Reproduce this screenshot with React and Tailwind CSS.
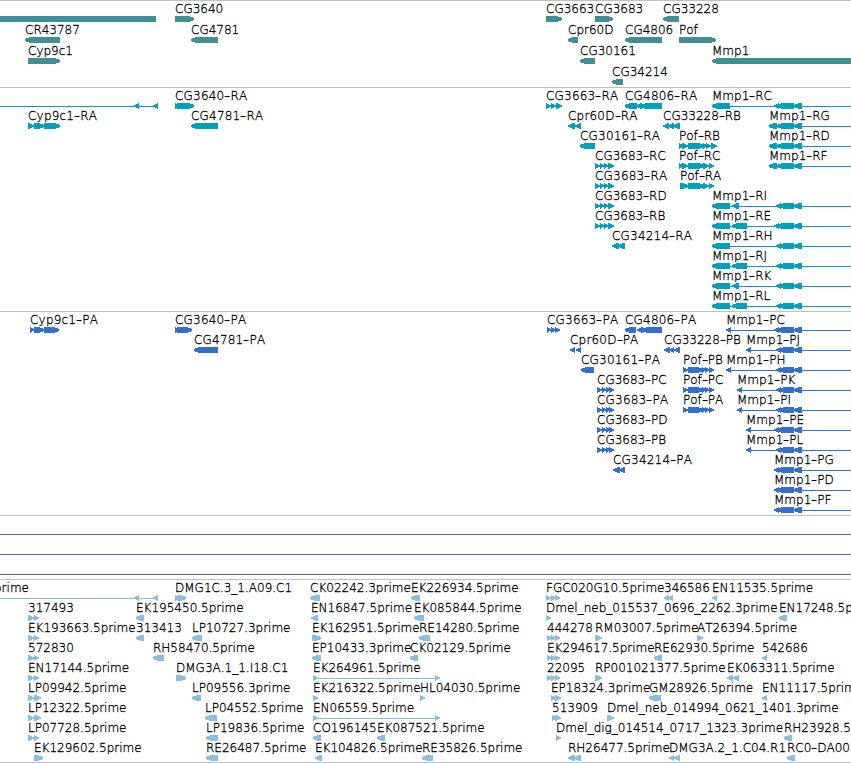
// A feature is { x, label, dir, segs, line }.
// segs are [start, end] pairs, line is the thin intron line behind them.
const f = (x, label, dir, segs, line) => ({ x, label, dir, segs, line })

const END = 860

const genes = [
    [
        f(0, "", "N", [[0, 156]]),
        f(175, "CG3640", "R", [[175, 194]]),
        f(546, "CG3663", "R", [[546, 562]]),
        f(595, "CG3683", "R", [[595, 613]]),
        f(663, "CG33228", "L", [[663, 679]]),
    ],
    [
        f(25, "CR43787", "L", [[25, 60]]),
        f(191, "CG4781", "L", [[191, 218]]),
        f(568, "Cpr60D", "L", [[568, 578]]),
        f(625, "CG4806", "L", [[625, 662]]),
        f(679, "Pof", "R", [[679, 716]]),
    ],
    [
        f(28, "Cyp9c1", "R", [[28, 60]]),
        f(580, "CG30161", "L", [[580, 595]]),
        f(712, "Mmp1", "L", [[712, END]]),
    ],
    [f(612, "CG34214", "L", [[612, 623]])],
]

// Mmp1 isoforms share the same exons on the right side
const tailA = [[774, 779], [777, 794], [794, 802]]
const tailB = [[776, 781], [779, 794], [794, 802]]
const tailC = [[769, 777], [777, 794], [794, 802]]
const mmp = (x, label, head, tail) => f(x, label, "L", [...head, ...tail], [x + 3, END])

const cg3683R = [[595, 600], [600, 604], [604, 608], [608, 614]]
const cg3683P = [[597, 602], [602, 606], [606, 610], [609, 614]]
const pofP = [[683, 688], [688, 703], [702, 706], [705, 709], [709, 714]]

const transcripts = [
    [
        f(0, "", "L", [[134, 139], [153, 158]], [0, 157]),
        f(175, "CG3640-RA", "R", [[175, 178], [177, 194]]),
        f(546, "CG3663-RA", "R", [[546, 551], [551, 556], [556, 562]]),
        f(625, "CG4806-RA", "L", [[625, 637], [636, 642], [641, 662]]),
        mmp(712, "Mmp1-RC", [[712, 730]], tailA),
    ],
    [
        f(28, "Cyp9c1-RA", "R", [[28, 34], [34, 44], [44, 60]]),
        f(191, "CG4781-RA", "L", [[191, 218]]),
        f(568, "Cpr60D-RA", "L", [[568, 575], [575, 581]]),
        f(663, "CG33228-RB", "L", [[663, 669], [668, 674], [673, 680]]),
        mmp(769, "Mmp1-RG", [], tailC),
    ],
    [
        f(580, "CG30161-RA", "L", [[580, 595]]),
        f(679, "Pof-RB", "R", [[679, 683], [682, 688], [688, 704], [703, 707], [706, 711], [711, 717]]),
        mmp(769, "Mmp1-RD", [], tailC),
    ],
    [
        f(595, "CG3683-RC", "R", cg3683R),
        f(679, "Pof-RC", "R", [[679, 683], [682, 688], [688, 704], [703, 709], [709, 714]]),
        mmp(769, "Mmp1-RF", [], tailC),
    ],
    [
        f(595, "CG3683-RA", "R", cg3683R),
        f(680, "Pof-RA", "R", [[680, 688], [688, 704], [703, 709], [709, 714]]),
    ],
    [f(595, "CG3683-RD", "R", cg3683R), mmp(712, "Mmp1-RI", [[712, 730], [732, 739]], tailB)],
    [f(595, "CG3683-RB", "R", cg3683R), mmp(712, "Mmp1-RE", [[712, 730], [732, 747]], tailA)],
    [f(612, "CG34214-RA", "L", [[612, 619], [618, 625]]), mmp(712, "Mmp1-RH", [[712, 730]], tailB)],
    [mmp(712, "Mmp1-RJ", [[712, 730], [732, 747]], tailB)],
    [mmp(712, "Mmp1-RK", [[712, 730], [732, 739]], tailB)],
    [mmp(712, "Mmp1-RL", [[712, 730], [732, 747]], tailB)],
]

const proteins = [
    [
        f(30, "Cyp9c1-PA", "R", [[30, 34], [34, 44], [44, 59]]),
        f(175, "CG3640-PA", "R", [[175, 178], [177, 192]]),
        f(547, "CG3663-PA", "R", [[547, 551], [551, 556], [555, 560]]),
        f(625, "CG4806-PA", "L", [[625, 636], [637, 643], [642, 662]]),
        mmp(726, "Mmp1-PC", [[726, 731]], tailA),
    ],
    [
        f(194, "CG4781-PA", "L", [[194, 218]]),
        f(570, "Cpr60D-PA", "L", [[570, 575], [576, 581]]),
        f(664, "CG33228-PB", "L", [[664, 670], [669, 674], [674, 680]]),
        mmp(746, "Mmp1-PJ", [[746, 751]], tailB),
    ],
    [
        f(581, "CG30161-PA", "L", [[581, 594]]),
        f(683, "Pof-PB", "R", pofP),
        mmp(726, "Mmp1-PH", [[726, 731]], tailB),
    ],
    [f(597, "CG3683-PC", "R", cg3683P), f(683, "Pof-PC", "R", pofP), mmp(737, "Mmp1-PK", [[737, 742]], tailB)],
    [f(597, "CG3683-PA", "R", cg3683P), f(683, "Pof-PA", "R", pofP), mmp(737, "Mmp1-PI", [[737, 742]], tailB)],
    [f(597, "CG3683-PD", "R", cg3683P), mmp(746, "Mmp1-PE", [[746, 751]], tailA)],
    [f(597, "CG3683-PB", "R", cg3683P), mmp(746, "Mmp1-PL", [[746, 751]], tailB)],
    [f(613, "CG34214-PA", "L", [[613, 620], [619, 625]]), mmp(774, "Mmp1-PG", [], tailA)],
    [mmp(774, "Mmp1-PD", [], tailA)],
    [mmp(774, "Mmp1-PF", [], tailA)],
]

const introns = [
    [f(0, "", "N", [], [0, END])],
    [f(0, "", "N", [], [0, END])],
    [f(0, "", "N", [], [0, END])],
]

const short = [[28, 34], [34, 39]]
const long = [[28, 34], [34, 41]]
const triple = [[547, 552], [551, 556], [555, 560]]

const ests = [
    [
        f(-6, "prime", "L", [[134, 139], [153, 158]], [0, 157]),
        f(175, "DMG1C.3_1.A09.C1", "R", [[175, 178], [177, 186]]),
        f(310, "CK02242.3prime", "L", [[310, 320]]),
        f(411, "EK226934.5prime", "L", [[411, 420]]),
        f(546, "FGC020G10.5prime", "R", [[546, 551], [551, 556], [555, 560]]),
        f(664, "346586", "L", [[664, 669], [668, 673]]),
        f(712, "EN11535.5prime", "L", [[712, 717]]),
    ],
    [
        f(28, "317493", "R", short),
        f(136, "EK195450.5prime", "L", [[136, 144]]),
        f(311, "EN16847.5prime", "L", [[311, 318]]),
        f(414, "EK085844.5prime", "L", [[414, 424]]),
        f(546, "Dmel_neb_015537_0696_2262.3prime", "R", [[546, 551]]),
        f(779, "EN17248.5prime", "L", [[779, 787]]),
    ],
    [
        f(28, "EK193663.5prime", "R", short),
        f(136, "313413", "L", [[136, 144]]),
        f(192, "LP10727.3prime", "L", [[192, 202]]),
        f(312, "EK162951.5prime", "R", [[312, 321]]),
        f(419, "RE14280.5prime", "L", [[419, 430]]),
        f(547, "444278", "R", triple),
        f(595, "RM03007.5prime", "R", [[595, 602]]),
        f(697, "AT26394.5prime", "R", [[697, 703]]),
    ],
    [
        f(28, "572830", "R", short),
        f(153, "RH58470.5prime", "L", [[153, 164]]),
        f(312, "EP10433.3prime", "L", [[312, 321]]),
        f(410, "CK02129.5prime", "L", [[410, 418]]),
        f(547, "EK294617.5prime", "R", triple),
        f(654, "RE62930.5prime", "L", [[654, 662]]),
        f(762, "542686", "L", [[762, 767]]),
    ],
    [
        f(28, "EN17144.5prime", "R", short),
        f(176, "DMG3A.1_1.I18.C1", "R", [[176, 186]]),
        f(313, "EK264961.5prime", "R", [[313, 318], [435, 440]], [313, 438]),
        f(547, "22095", "R", triple),
        f(595, "RP001021377.5prime", "R", [[595, 602]]),
        f(727, "EK063311.5prime", "L", [[727, 733], [733, 739]]),
    ],
    [
        f(28, "LP09942.5prime", "R", long),
        f(192, "LP09556.3prime", "L", [[192, 201]]),
        f(313, "EK216322.5prime", "R", [[313, 318]]),
        f(420, "HL04030.5prime", "R", [[420, 425]]),
        f(551, "EP18324.3prime", "R", [[551, 556], [555, 561]]),
        f(649, "GM28926.5prime", "L", [[649, 661]]),
        f(762, "EN11117.5prime", "L", [[762, 767]]),
    ],
    [
        f(28, "LP12322.5prime", "R", long),
        f(205, "LP04552.5prime", "L", [[205, 217]]),
        f(313, "EN06559.5prime", "R", [[313, 318], [435, 440]], [313, 438]),
        f(552, "513909", "R", [[552, 557], [555, 561]]),
        f(607, "Dmel_neb_014994_0621_1401.3prime", "R", [[607, 614]]),
    ],
    [
        f(28, "LP07728.5prime", "R", short),
        f(206, "LP19836.5prime", "L", [[206, 218]]),
        f(313, "CO196145", "L", [[313, 321]]),
        f(377, "EK087521.5prime", "L", [[377, 385]]),
        f(556, "Dmel_dig_014514_0717_1323.3prime", "R", [[556, 561]]),
        f(784, "RH23928.5prime", "L", [[784, 792]]),
    ],
    [
        f(34, "EK129602.5prime", "R", [[34, 43]]),
        f(206, "RE26487.5prime", "L", [[206, 218]]),
        f(315, "EK104826.5prime", "L", [[315, 322]]),
        f(422, "RE35826.5prime", "L", [[422, 433]]),
        f(568, "RH26477.5prime", "L", [[568, 575], [574, 581]]),
        f(669, "DMG3A.2_1.C04.R1", "L", [[669, 674], [674, 680]]),
        f(787, "RC0-DA00", "L", [[787, 795]]),
    ],
]

// Short segments are plain triangles, longer ones a bar with a tapered end
function segPoints([a, b], dir) {
    if (dir === "N") return `${a},0 ${b},0 ${b},6 ${a},6`
    const [from, to] = dir === "R" ? [a, b] : [b, a]
    const len = b - a
    const neck = dir === "R" ? to - Math.min(5, len) : to + Math.min(5, len)
    if (len <= 7) return `${from},0 ${neck},0 ${to},2.4 ${to},3.6 ${neck},6 ${from},6`
    return `${from},0 ${neck},0 ${to},2 ${to},4 ${neck},6 ${from},6`
}

function Label({ text }) {
    const [name, suffix] = text.split("-")
    if (!suffix) return text
    const wide = name.length > 4 && suffix.endsWith("A")
    return (
        <span className={wide ? "tracking-[0.2px]" : ""}>
            {name}<span className="inline-block origin-left scale-x-[1.4] mr-[1.5px]">-</span>{suffix}
        </span>
    )
}

function Row({ features, className }) {
    return (
        <div className={`relative w-full ${className}`}>
            <svg className="absolute left-0 top-[15px] fill-current" width="851" height="6" shapeRendering="crispEdges">
                {features.map((ft, i) => (
                    <g key={i}>
                        {ft.line && <rect x={ft.line[0]} y="3" width={ft.line[1] - ft.line[0]} height="1" />}
                        {ft.segs.map((s, j) => <polygon key={j} points={segPoints(s, ft.dir)} />)}
                    </g>
                ))}
            </svg>
            {features.filter((ft) => ft.label).map((ft) => (
                <span key={ft.label} className="absolute top-0 text-black whitespace-nowrap" style={{ left: ft.x }}>
                    <Label text={ft.label} />
                </span>
            ))}
        </div>
    )
}

function Track({ rows, className, rowClass = "h-5" }) {
    return (
        <section className={`w-full border-t border-[#c0c0c0] ${className}`}>
            {rows.map((features, i) => <Row key={i} features={features} className={rowClass} />)}
        </section>
    )
}

function App() {
    return (
        <main className="w-[851px] h-[763px] overflow-hidden bg-white text-[12px] leading-[16px] font-extralight font-['DejaVu_Sans',sans-serif] [font-kerning:none] [-webkit-text-stroke:0.3px_black]">
            <Track rows={genes} className="h-[87px] text-[#408f95]" rowClass="h-[21px]" />
            <Track rows={transcripts} className="h-[224px] text-[#00a0c0]" />
            <Track rows={proteins} className="h-[204px] text-[#3070d0]" />
            <Track rows={introns} className="h-[64px] text-[#7855a8]" />
            <Track rows={ests} className="h-[184px] border-b text-[#88bfe0]" />
        </main>
    )
}

export default App
